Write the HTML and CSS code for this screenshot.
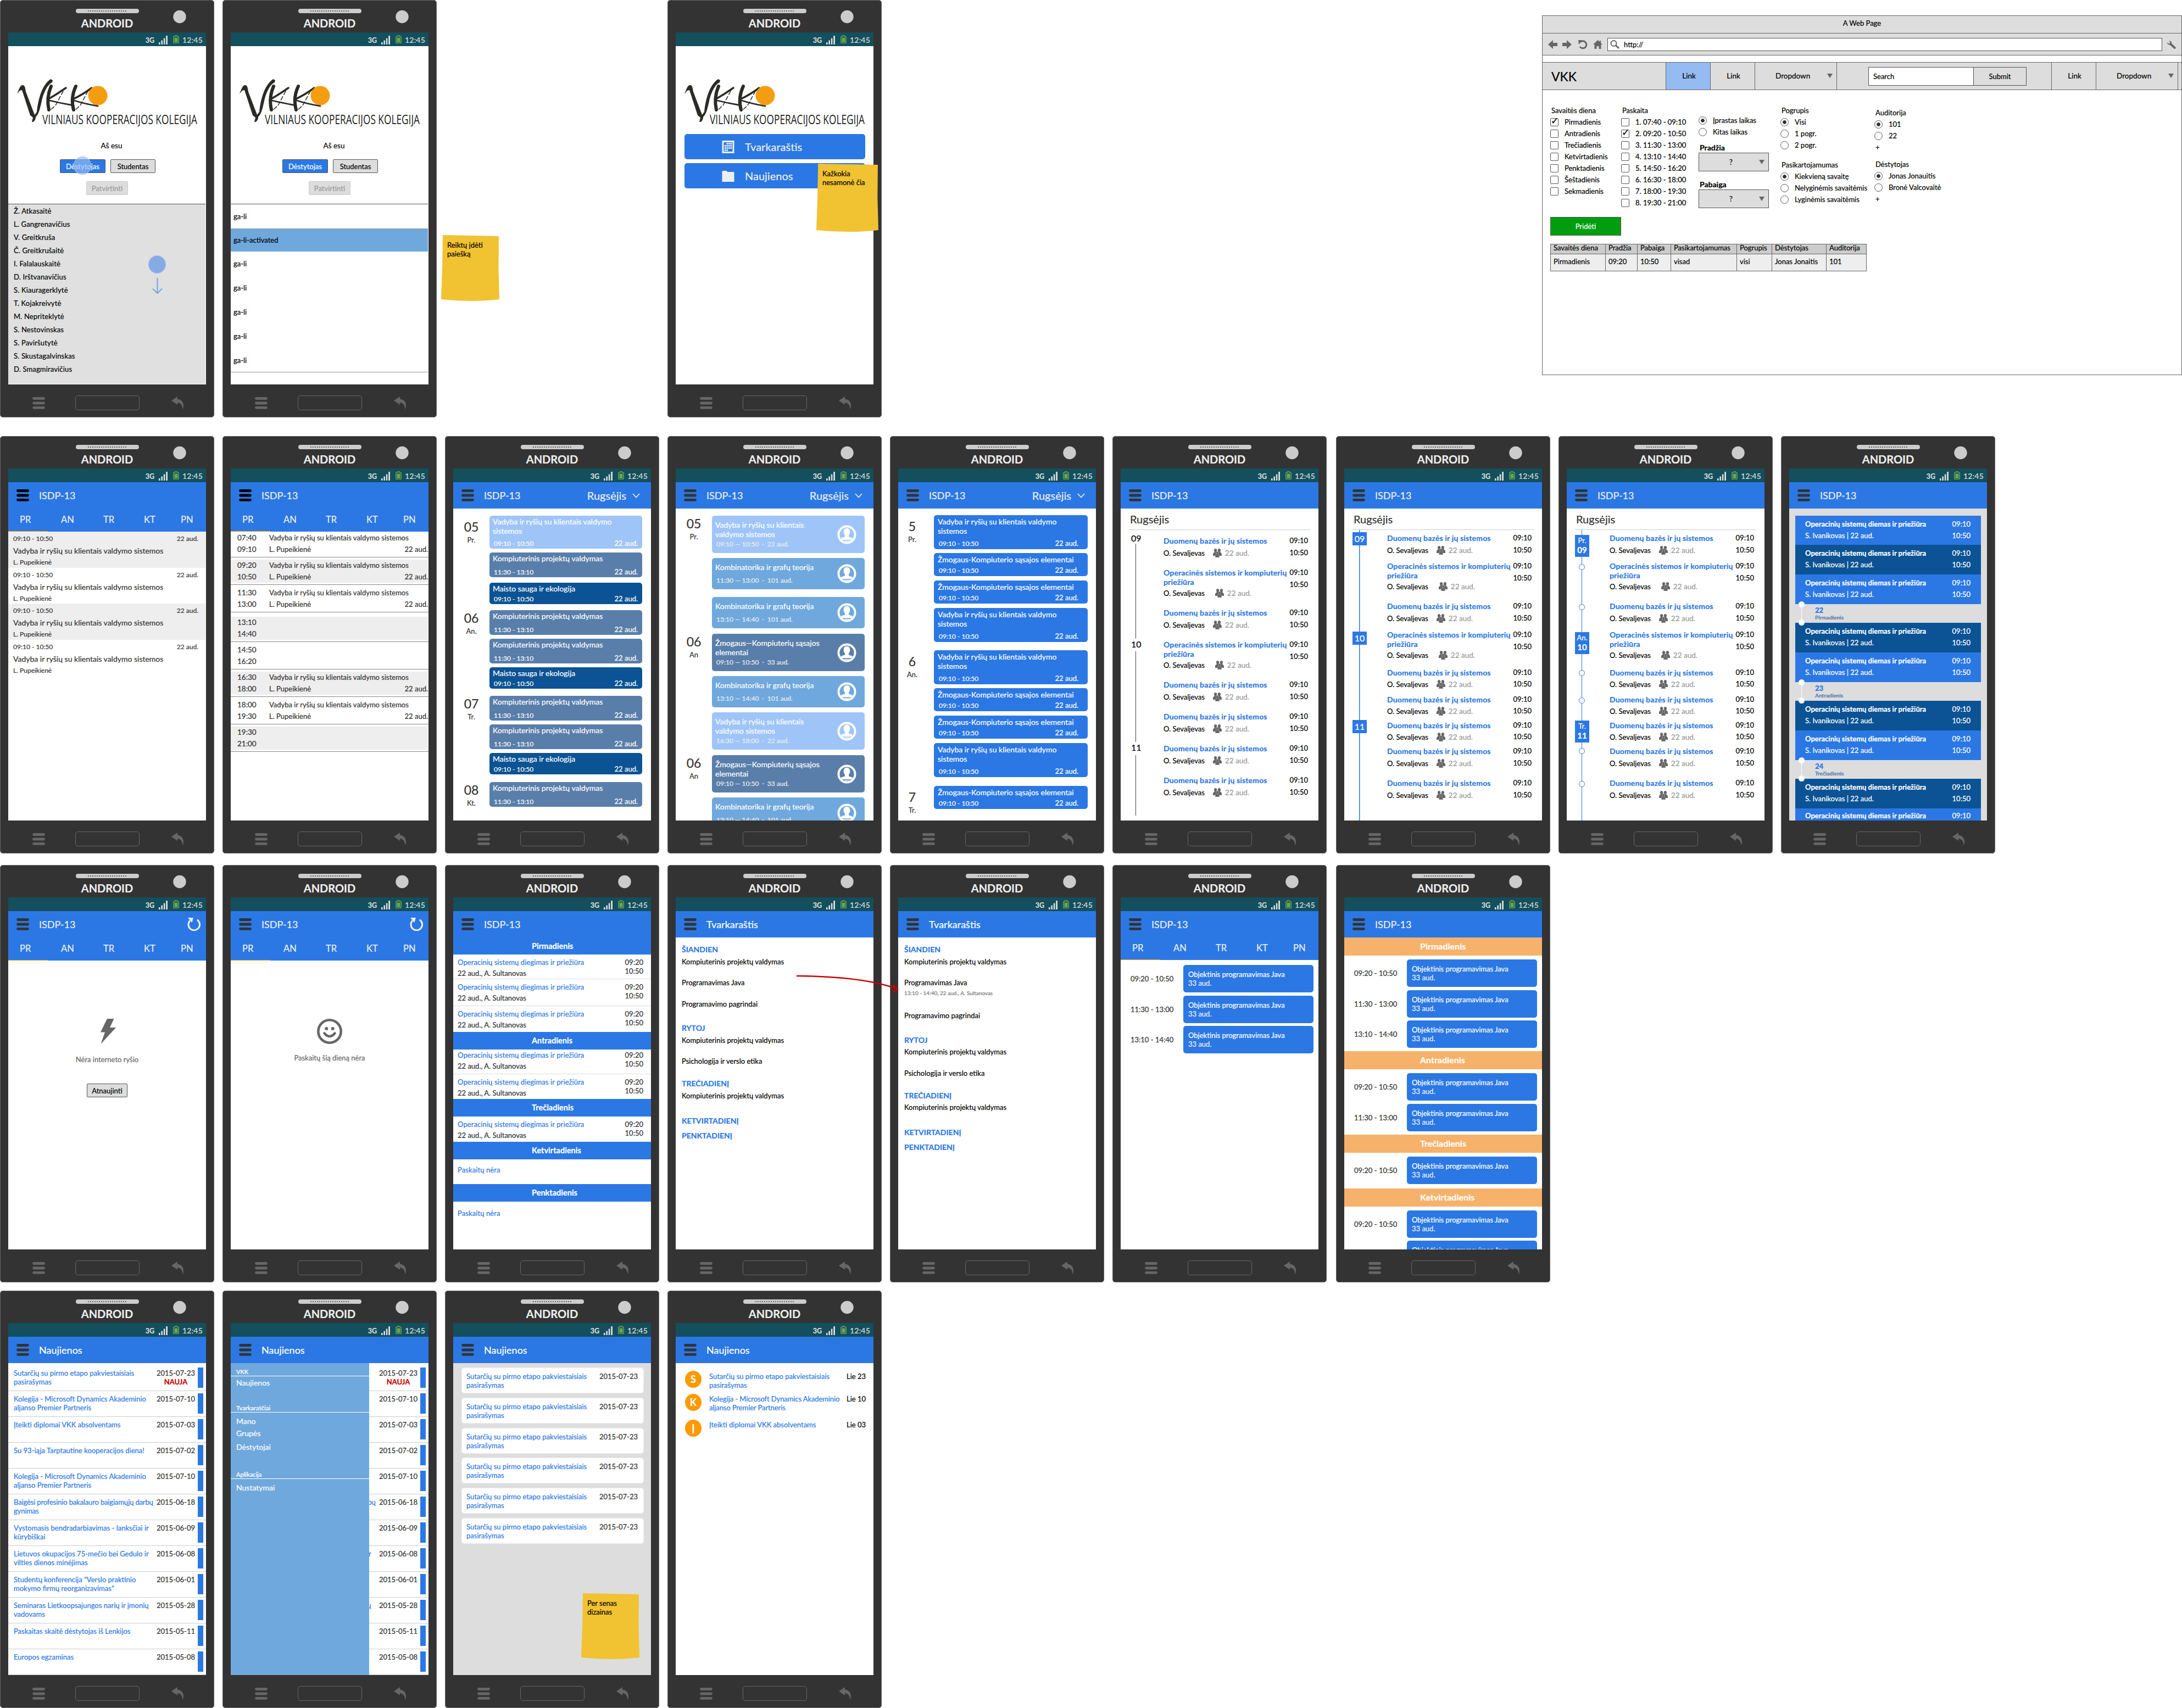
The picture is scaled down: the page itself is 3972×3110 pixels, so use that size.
FILE: index.html
```html
<!DOCTYPE html>
<html lang="lt">
<head>
<meta charset="utf-8">
<title>VKK mockups</title>
<link rel="stylesheet" href="styles.css">
</head>
<body>
<svg class="defs" aria-hidden="true">
  <symbol id="signal" viewBox="0 0 16 16"><path d="M0 12h2.600v4H0zM4.400 8.500H7V16H4.400zM8.800 4.500h2.600V16H8.800zM13.200 0h2.800v16h-2.800z" fill="#ddd"/></symbol>
  <symbol id="battery" viewBox="0 0 11 15"><path d="M3.500 1h4v1.400h1.700q1 0 1 1v10q0 1-1 1H1.800q-1 0-1-1v-10q0-1 1-1h1.700z" fill="none" stroke="#6aa84f" stroke-width="1.400"/><path d="M2.500 4.500h6v8.300h-6z" fill="#6aa84f"/></symbol>
  <symbol id="bars" viewBox="0 0 23 22"><path d="M2.500 2.500h18M2.500 11h18M2.500 19.300h18" stroke="currentColor" stroke-width="4.800" stroke-linecap="round"/></symbol>
  <symbol id="back" viewBox="0 0 23 24"><path d="M0 7.500 11 0v4.600C20 5.500 24.500 14 20.500 23.500 20 16 17.500 11.600 11 11.300V15z" fill="#666"/></symbol>
  <symbol id="group" viewBox="0 0 16 16"><path d="M4.600 0a2.600 2.900 0 0 1 2.100 4.700L6.500 7h3l-.2-2.300A2.600 2.900 0 1 1 13.500 4.700l-.3 1.800Q16 7.500 16 10v3H0v-3Q0 7.500 2.800 6.500L2.500 4.700A2.600 2.900 0 0 1 4.600 0z" fill="#666"/><path d="M8 5a2.300 2.600 0 0 1 1.600 4.500l.2 1.500q2 .800 2 2.500V16H4.200v-2.500q0-1.700 2-2.500l.2-1.500A2.300 2.600 0 0 1 8 5z" fill="#666" stroke="#ccc" stroke-width=".5"/></symbol>
  <symbol id="user" viewBox="0 0 36 36"><circle cx="18" cy="18" r="15.500" fill="none" stroke="#fff" stroke-width="4"/><path d="M18 6c4 0 6 3 6 6.500 0 3-1 5-2.300 6.200V22l7.300 2.500-1.500 3.500h-19L7 24.500l7.300-2.500v-3.300C13 17.500 12 15.500 12 12.500 12 9 14 6 18 6zM11.500 29.500h13q-6.500 2.500-13 0z" fill="#fff"/></symbol>
  <symbol id="reload" viewBox="0 0 24 24"><path d="M17.800 3.800A10.300 10.300 0 1 1 5 5.200" fill="none" stroke="#eee" stroke-width="3"/><path d="M1 0h9.800L8.500 9z" fill="#eee"/></symbol>
  <symbol id="chevron" viewBox="0 0 14 9"><path d="M1 1l6 6.500L13 1" fill="none" stroke="#eee" stroke-width="1.700"/></symbol>
  <symbol id="logo" viewBox="0 0 330 86">
    <path d="M0 27C4 17 6 10 11 11c4 1 4 7 5 12l16 42 4-5C38 40 44 12 61 0l4 2-1 4c-9 4-16 20-19 34-3 12-5 24-11 29 0 6-4 10-7 9l2-8-5-4L9 20 5 21z" fill="#2b2b26"/>
    <g fill="none" stroke="#2b2b26" stroke-linecap="round">
      <path d="M62 13Q53 34 58 56M107 13Q97 34 103 56" stroke-width="6"/>
      <path d="M89 16Q72 28 56 37M136 16Q120 28 101 37" stroke-width="3.500"/>
      <path d="M55 38Q80 44 103 48M101 38Q122 45 147 49" stroke-width="2.800"/>
      <path d="M84 22 70 48 60 57M129 22 115 48 105 57" stroke-width="1.500" stroke-dasharray="7 4"/>
    </g>
    <circle cx="147" cy="30" r="17.500" fill="#f59d11"/>
    <text x="46" y="82" textLength="282" lengthAdjust="spacingAndGlyphs" font-family="Open Sans, sans-serif" font-size="24.500" fill="#222">VILNIAUS KOOPERACIJOS KOLEGIJA</text>
  </symbol>
  <symbol id="chrome-top" viewBox="0 0 389 59"><rect x="138" y="16" width="115" height="8" rx="4" fill="#ccc"/><path d="M160 20h71" stroke="#333" stroke-width="1.500" stroke-dasharray="1.800 2.200"/><circle cx="327" cy="30.500" r="11.700" fill="#ccc"/></symbol>
</svg>

<main class="board">

<div class="row">
  <section class="phone">
    <header class="top"><svg><use href="#chrome-top"/></svg><b>ANDROID</b></header>
    <div class="status"><b>3G</b><svg class="sig"><use href="#signal"/></svg><svg class="bat"><use href="#battery"/></svg><span>12:45</span></div>
    <div class="screen login">
      <svg class="logo"><use href="#logo"/></svg>
      <p class="iam">Aš esu</p>
      <div class="roles"><button class="btn primary">Dėstytojas</button><button class="btn">Studentas</button></div>
      <button class="btn disabled">Patvirtinti</button>
      <ul class="teachers">
        <li>Ž. Atkasaitė</li><li>L. Gangrenavičius</li><li>V. Greitkruša</li><li>Č. Greitkrušaitė</li><li>I. Falalauskaitė</li><li>D. Irštvanavičius</li><li>S. Kiauragerklytė</li><li>T. Kojakreivytė</li><li>M. Nepriteklytė</li><li>S. Nestovinskas</li><li>S. Paviršutytė</li><li>S. Skustagalvinskas</li><li>D. Smagmiravičius</li>
      </ul>
      <i class="touch tap"></i><i class="touch swipe"></i>
      <svg class="swipe-arrow" viewBox="0 0 19 30"><path d="M9.500 0v28M1 19.500l8.500 8.500 8.500-8.500" fill="none" stroke="#6fa8dc" stroke-width="2"/></svg>
    </div>
    <footer class="keys"><svg class="burger"><use href="#bars"/></svg><i class="home"></i><svg class="back"><use href="#back"/></svg></footer>
  </section>

  <section class="phone">
    <header class="top"><svg><use href="#chrome-top"/></svg><b>ANDROID</b></header>
    <div class="status"><b>3G</b><svg class="sig"><use href="#signal"/></svg><svg class="bat"><use href="#battery"/></svg><span>12:45</span></div>
    <div class="screen login">
      <svg class="logo"><use href="#logo"/></svg>
      <p class="iam">Aš esu</p>
      <div class="roles"><button class="btn primary">Dėstytojas</button><button class="btn">Studentas</button></div>
      <button class="btn disabled">Patvirtinti</button>
      <ul class="groups"><li>ga-li</li><li class="on">ga-li-activated</li><li>ga-li</li><li>ga-li</li><li>ga-li</li><li>ga-li</li><li>ga-li</li></ul>
    </div>
    <footer class="keys"><svg class="burger"><use href="#bars"/></svg><i class="home"></i><svg class="back"><use href="#back"/></svg></footer>
  </section>

  <section class="phone skip">
    <header class="top"><svg><use href="#chrome-top"/></svg><b>ANDROID</b></header>
    <div class="status"><b>3G</b><svg class="sig"><use href="#signal"/></svg><svg class="bat"><use href="#battery"/></svg><span>12:45</span></div>
    <div class="screen">
      <svg class="logo"><use href="#logo"/></svg>
      <div class="menu">
        <a><svg viewBox="0 0 22 23"><path d="M0 0h22v23H0z" fill="#eee"/><path d="M3 3h16v17H3z" fill="#2b78e4"/><path d="M8 4h2.600v3H8zM11.500 4h2.600v3h-2.600zM15 4h2.600v3H15zM4.500 8h2.600v3H4.500zM8 8h2.600v3H8zM11.500 8h2.600v3h-2.600zM15 8h2.600v3H15zM4.500 12h2.600v3H4.500zM8 12h2.600v3H8zM11.500 12h2.600v3h-2.600zM15 12h2.600v3H15zM4.500 16h2.600v3H4.500zM8 16h2.600v3H8z" fill="#eee"/></svg>Tvarkaraštis</a>
        <a><svg viewBox="0 0 22 23"><path d="M0 3.500Q0 2 1.500 2h6Q9 2 9.200 4h11.300Q22 4 22 5.500V22H0z" fill="#eee"/></svg>Naujienos</a>
      </div>
    </div>
    <footer class="keys"><svg class="burger"><use href="#bars"/></svg><i class="home"></i><svg class="back"><use href="#back"/></svg></footer>
  </section>

  <section class="window">
    <div class="win-title">A Web Page</div>
    <div class="toolbar">
      <svg viewBox="0 0 17 16"><path d="M0 8 9 0v5h8v6H9v5z" fill="#666"/></svg>
      <svg viewBox="0 0 17 16"><path d="M17 8 8 0v5H0v6h8v5z" fill="#666"/></svg>
      <svg viewBox="0 0 17 16"><path d="M4 3.500A6.500 6.500 0 1 1 3 12" fill="none" stroke="#666" stroke-width="3"/><path d="M0 0h8L1 8z" fill="#666"/></svg>
      <svg viewBox="0 0 17 16"><path d="M8.500 0 0 8h2.500v8h4v-5h4v5h4V8H17l-3-3V1h-2v2z" fill="#666"/></svg>
      <div class="url"><svg viewBox="0 0 17 16"><circle cx="6.500" cy="6" r="5" fill="none" stroke="#666" stroke-width="2"/><path d="M10 9.500l6 5.500" stroke="#666" stroke-width="3"/></svg>http://</div>
      <svg viewBox="0 0 17 16"><path d="M3 1.500 5.500 4 5 6 2.500 6.500 0 4Q0 8.500 4.500 8.500L13 16q3 0 2.800-2.500L8 6Q8.500 1 3 1.500z" fill="#666"/></svg>
    </div>
    <nav class="nav">
      <strong>VKK</strong><a class="link on">Link</a><a class="link">Link</a><a class="drop">Dropdown<i></i></a>
      <span class="search">Search</span><span class="submit">Submit</span>
      <a class="link right">Link</a><a class="drop last">Dropdown<i></i></a>
    </nav>
    <div class="form">
      <div class="col"><p>Savaitės diena</p><label class="cb on">Pirmadienis</label><label class="cb">Antradienis</label><label class="cb">Trečiadienis</label><label class="cb">Ketvirtadienis</label><label class="cb">Penktadienis</label><label class="cb">Šeštadienis</label><label class="cb">Sekmadienis</label></div>
      <div class="col"><p>Paskaita</p><label class="cb">1. 07:40 - 09:10</label><label class="cb on">2. 09:20 - 10:50</label><label class="cb">3. 11:30 - 13:00</label><label class="cb">4. 13:10 - 14:40</label><label class="cb">5. 14:50 - 16:20</label><label class="cb">6. 16:30 - 18:00</label><label class="cb">7. 18:00 - 19:30</label><label class="cb">8. 19:30 - 21:00</label></div>
      <div class="col times"><label class="rd on">Įprastas laikas</label><label class="rd">Kitas laikas</label><h5>Pradžia</h5><div class="select">?<i></i></div><h5>Pabaiga</h5><div class="select">?<i></i></div></div>
      <div class="col"><p>Pogrupis</p><label class="rd on">Visi</label><label class="rd">1 pogr.</label><label class="rd">2 pogr.</label><p class="second">Pasikartojamumas</p><label class="rd on">Kiekvieną savaitę</label><label class="rd">Nelyginėmis savaitėmis</label><label class="rd">Lyginėmis savaitėmis</label></div>
      <div class="col rooms"><p>Auditorija</p><label class="rd on">101</label><label class="rd">22</label><p>+</p><p class="second">Dėstytojas</p><label class="rd on">Jonas Jonauitis</label><label class="rd">Bronė Valcovaitė</label><p>+</p></div>
    </div>
    <div class="add">Pridėti</div>
    <table class="table">
      <tr><th>Savaitės diena</th><th>Pradžia</th><th>Pabaiga</th><th>Pasikartojamumas</th><th>Pogrupis</th><th>Dėstytojas</th><th>Auditorija</th></tr>
      <tr><td>Pirmadienis</td><td>09:20</td><td>10:50</td><td>visad</td><td>visi</td><td>Jonas Jonaitis</td><td>101</td></tr>
    </table>
  </section>
</div>

<div class="row second-row">
  <section class="phone">
    <header class="top"><svg><use href="#chrome-top"/></svg><b>ANDROID</b></header>
    <div class="status"><b>3G</b><svg class="sig"><use href="#signal"/></svg><svg class="bat"><use href="#battery"/></svg><span>12:45</span></div>
    <div class="screen">
      <div class="bar dark"><svg class="burger"><use href="#bars"/></svg><span>ISDP-13</span></div>
      <div class="tabs"><span>PR</span><span>AN</span><span>TR</span><span>KT</span><span>PN</span></div>
      <ul class="lectures">
        <li><p class="s">09:10 - 10:50<span>22 aud.</span></p><p class="t">Vadyba ir ryšių su klientais valdymo sistemos</p><p class="s">L. Pupeikienė</p></li>
        <li><p class="s">09:10 - 10:50<span>22 aud.</span></p><p class="t">Vadyba ir ryšių su klientais valdymo sistemos</p><p class="s">L. Pupeikienė</p></li>
        <li><p class="s">09:10 - 10:50<span>22 aud.</span></p><p class="t">Vadyba ir ryšių su klientais valdymo sistemos</p><p class="s">L. Pupeikienė</p></li>
        <li><p class="s">09:10 - 10:50<span>22 aud.</span></p><p class="t">Vadyba ir ryšių su klientais valdymo sistemos</p><p class="s">L. Pupeikienė</p></li>
      </ul>
    </div>
    <footer class="keys"><svg class="burger"><use href="#bars"/></svg><i class="home"></i><svg class="back"><use href="#back"/></svg></footer>
  </section>

  <section class="phone">
    <header class="top"><svg><use href="#chrome-top"/></svg><b>ANDROID</b></header>
    <div class="status"><b>3G</b><svg class="sig"><use href="#signal"/></svg><svg class="bat"><use href="#battery"/></svg><span>12:45</span></div>
    <div class="screen">
      <div class="bar dark"><svg class="burger"><use href="#bars"/></svg><span>ISDP-13</span></div>
      <div class="tabs"><span>PR</span><span>AN</span><span>TR</span><span>KT</span><span>PN</span></div>
      <ul class="slots">
        <li><div><time>07:40<br>09:10</time><p>Vadyba ir ryšių su klientais valdymo sistemos<br>L. Pupeikienė<span>22 aud.</span></p></div></li>
        <li><div><time>09:20<br>10:50</time><p>Vadyba ir ryšių su klientais valdymo sistemos<br>L. Pupeikienė<span>22 aud.</span></p></div></li>
        <li><div><time>11:30<br>13:00</time><p>Vadyba ir ryšių su klientais valdymo sistemos<br>L. Pupeikienė<span>22 aud.</span></p></div></li>
        <li><div><time>13:10<br>14:40</time></div></li>
        <li><div><time>14:50<br>16:20</time></div></li>
        <li><div><time>16:30<br>18:00</time><p>Vadyba ir ryšių su klientais valdymo sistemos<br>L. Pupeikienė<span>22 aud.</span></p></div></li>
        <li><div><time>18:00<br>19:30</time><p>Vadyba ir ryšių su klientais valdymo sistemos<br>L. Pupeikienė<span>22 aud.</span></p></div></li>
        <li><div><time>19:30<br>21:00</time></div></li>
      </ul>
    </div>
    <footer class="keys"><svg class="burger"><use href="#bars"/></svg><i class="home"></i><svg class="back"><use href="#back"/></svg></footer>
  </section>

  <section class="phone">
    <header class="top"><svg><use href="#chrome-top"/></svg><b>ANDROID</b></header>
    <div class="status"><b>3G</b><svg class="sig"><use href="#signal"/></svg><svg class="bat"><use href="#battery"/></svg><span>12:45</span></div>
    <div class="screen">
      <div class="bar"><svg class="burger"><use href="#bars"/></svg><span>ISDP-13</span><span class="month">Rugsėjis<svg><use href="#chevron"/></svg></span></div>
      <div class="days mixed">
        <div class="day first"><div class="date"><b>05</b>Pr.</div><div>
          <div class="ev tall pale">Vadyba ir ryšių su klientais valdymo sistemos<p>09:10 - 10:50<span>22 aud.</span></p></div>
          <div class="ev steel">Kompiuterinis projektų valdymas<p>11:30 - 13:10<span>22 aud.</span></p></div>
          <div class="ev short navy">Maisto sauga ir ekologija<p>09:10 - 10:50<span>22 aud.</span></p></div></div></div>
        <div class="day"><div class="date"><b>06</b>An.</div><div>
          <div class="ev steel">Kompiuterinis projektų valdymas<p>11:30 - 13:10<span>22 aud.</span></p></div>
          <div class="ev steel">Kompiuterinis projektų valdymas<p>11:30 - 13:10<span>22 aud.</span></p></div>
          <div class="ev short navy">Maisto sauga ir ekologija<p>09:10 - 10:50<span>22 aud.</span></p></div></div></div>
        <div class="day"><div class="date"><b>07</b>Tr.</div><div>
          <div class="ev steel">Kompiuterinis projektų valdymas<p>11:30 - 13:10<span>22 aud.</span></p></div>
          <div class="ev steel">Kompiuterinis projektų valdymas<p>11:30 - 13:10<span>22 aud.</span></p></div>
          <div class="ev short navy">Maisto sauga ir ekologija<p>09:10 - 10:50<span>22 aud.</span></p></div></div></div>
        <div class="day"><div class="date"><b>08</b>Kt.</div><div>
          <div class="ev steel">Kompiuterinis projektų valdymas<p>11:30 - 13:10<span>22 aud.</span></p></div></div></div>
      </div>
    </div>
    <footer class="keys"><svg class="burger"><use href="#bars"/></svg><i class="home"></i><svg class="back"><use href="#back"/></svg></footer>
  </section>

  <section class="phone">
    <header class="top"><svg><use href="#chrome-top"/></svg><b>ANDROID</b></header>
    <div class="status"><b>3G</b><svg class="sig"><use href="#signal"/></svg><svg class="bat"><use href="#battery"/></svg><span>12:45</span></div>
    <div class="screen">
      <div class="bar"><svg class="burger"><use href="#bars"/></svg><span>ISDP-13</span><span class="month">Rugsėjis<svg><use href="#chevron"/></svg></span></div>
      <div class="days people">
        <div class="day"><div class="date"><b>05</b>Pr.</div><div>
          <div class="ev tall pale"><div>Vadyba ir ryšių su klientais valdymo sistemos<p>09:10 — 10:50 &nbsp;·&nbsp; 22 aud.</p></div><svg><use href="#user"/></svg></div>
          <div class="ev sky"><div>Kombinatorika ir grafų teorija<p>11:30 — 13:00 &nbsp;·&nbsp; 101 aud.</p></div><svg><use href="#user"/></svg></div>
          <div class="ev sky apart"><div>Kombinatorika ir grafų teorija<p>13:10 — 14:40 &nbsp;·&nbsp; 101 aud.</p></div><svg><use href="#user"/></svg></div></div></div>
        <div class="day"><div class="date"><b>06</b>An</div><div>
          <div class="ev tall steel"><div>Žmogaus—Kompiuterių sąsajos elementai<p>09:10 — 10:50 &nbsp;·&nbsp; 33 aud.</p></div><svg><use href="#user"/></svg></div>
          <div class="ev sky"><div>Kombinatorika ir grafų teorija<p>13:10 — 14:40 &nbsp;·&nbsp; 101 aud.</p></div><svg><use href="#user"/></svg></div>
          <div class="ev tall pale"><div>Vadyba ir ryšių su klientais valdymo sistemos<p>16:30 — 18:00 &nbsp;·&nbsp; 22 aud.</p></div><svg><use href="#user"/></svg></div></div></div>
        <div class="day"><div class="date"><b>06</b>An</div><div>
          <div class="ev tall steel"><div>Žmogaus—Kompiuterių sąsajos elementai<p>09:10 — 10:50 &nbsp;·&nbsp; 33 aud.</p></div><svg><use href="#user"/></svg></div>
          <div class="ev sky"><div>Kombinatorika ir grafų teorija<p>13:10 — 14:40 &nbsp;·&nbsp; 101 aud.</p></div><svg><use href="#user"/></svg></div></div></div>
      </div>
    </div>
    <footer class="keys"><svg class="burger"><use href="#bars"/></svg><i class="home"></i><svg class="back"><use href="#back"/></svg></footer>
  </section>

  <section class="phone">
    <header class="top"><svg><use href="#chrome-top"/></svg><b>ANDROID</b></header>
    <div class="status"><b>3G</b><svg class="sig"><use href="#signal"/></svg><svg class="bat"><use href="#battery"/></svg><span>12:45</span></div>
    <div class="screen">
      <div class="bar"><svg class="burger"><use href="#bars"/></svg><span>ISDP-13</span><span class="month">Rugsėjis<svg><use href="#chevron"/></svg></span></div>
      <div class="days plain">
        <div class="day"><div class="date"><b>5</b>Pr.</div><div>
          <div class="ev tall">Vadyba ir ryšių su klientais valdymo sistemos<p>09:10 - 10:50<span>22 aud.</span></p></div>
          <div class="ev">Žmogaus-Kompiuterio sąsajos elementai<p>09:10 - 10:50<span>22 aud.</span></p></div>
          <div class="ev">Žmogaus-Kompiuterio sąsajos elementai<p>09:10 - 10:50<span>22 aud.</span></p></div>
          <div class="ev tall">Vadyba ir ryšių su klientais valdymo sistemos<p>09:10 - 10:50<span>22 aud.</span></p></div></div></div>
        <div class="day"><div class="date"><b>6</b>An.</div><div>
          <div class="ev tall">Vadyba ir ryšių su klientais valdymo sistemos<p>09:10 - 10:50<span>22 aud.</span></p></div>
          <div class="ev">Žmogaus-Kompiuterio sąsajos elementai<p>09:10 - 10:50<span>22 aud.</span></p></div>
          <div class="ev">Žmogaus-Kompiuterio sąsajos elementai<p>09:10 - 10:50<span>22 aud.</span></p></div>
          <div class="ev tall">Vadyba ir ryšių su klientais valdymo sistemos<p>09:10 - 10:50<span>22 aud.</span></p></div></div></div>
        <div class="day"><div class="date"><b>7</b>Tr.</div><div>
          <div class="ev">Žmogaus-Kompiuterio sąsajos elementai<p>09:10 - 10:50<span>22 aud.</span></p></div></div></div>
      </div>
    </div>
    <footer class="keys"><svg class="burger"><use href="#bars"/></svg><i class="home"></i><svg class="back"><use href="#back"/></svg></footer>
  </section>

  <section class="phone">
    <header class="top"><svg><use href="#chrome-top"/></svg><b>ANDROID</b></header>
    <div class="status"><b>3G</b><svg class="sig"><use href="#signal"/></svg><svg class="bat"><use href="#battery"/></svg><span>12:45</span></div>
    <div class="screen">
      <div class="bar"><svg class="burger"><use href="#bars"/></svg><span>ISDP-13</span></div>
      <h2 class="heading">Rugsėjis</h2>
      <div class="agenda loose">
        <div class="rail numbers"><b>09</b><i></i><b>10</b><i></i><b>11</b><i></i></div>
        <ul>
          <li><div><h4>Duomenų bazės ir jų sistemos</h4><p>O. Sevaljevas<svg><use href="#group"/></svg><em>22 aud.</em></p></div><time>09:10<br>10:50</time></li>
          <li class="two"><div><h4>Operacinės sistemos ir kompiuterių priežiūra</h4><p>O. Sevaljevas<svg><use href="#group"/></svg><em>22 aud.</em></p></div><time>09:10<br>10:50</time></li>
          <li><div><h4>Duomenų bazės ir jų sistemos</h4><p>O. Sevaljevas<svg><use href="#group"/></svg><em>22 aud.</em></p></div><time>09:10<br>10:50</time></li>
          <li class="two"><div><h4>Operacinės sistemos ir kompiuterių priežiūra</h4><p>O. Sevaljevas<svg><use href="#group"/></svg><em>22 aud.</em></p></div><time>09:10<br>10:50</time></li>
          <li><div><h4>Duomenų bazės ir jų sistemos</h4><p>O. Sevaljevas<svg><use href="#group"/></svg><em>22 aud.</em></p></div><time>09:10<br>10:50</time></li>
          <li><div><h4>Duomenų bazės ir jų sistemos</h4><p>O. Sevaljevas<svg><use href="#group"/></svg><em>22 aud.</em></p></div><time>09:10<br>10:50</time></li>
          <li><div><h4>Duomenų bazės ir jų sistemos</h4><p>O. Sevaljevas<svg><use href="#group"/></svg><em>22 aud.</em></p></div><time>09:10<br>10:50</time></li>
          <li><div><h4>Duomenų bazės ir jų sistemos</h4><p>O. Sevaljevas<svg><use href="#group"/></svg><em>22 aud.</em></p></div><time>09:10<br>10:50</time></li>
        </ul>
      </div>
    </div>
    <footer class="keys"><svg class="burger"><use href="#bars"/></svg><i class="home"></i><svg class="back"><use href="#back"/></svg></footer>
  </section>

  <section class="phone">
    <header class="top"><svg><use href="#chrome-top"/></svg><b>ANDROID</b></header>
    <div class="status"><b>3G</b><svg class="sig"><use href="#signal"/></svg><svg class="bat"><use href="#battery"/></svg><span>12:45</span></div>
    <div class="screen">
      <div class="bar"><svg class="burger"><use href="#bars"/></svg><span>ISDP-13</span></div>
      <h2 class="heading">Rugsėjis</h2>
      <div class="agenda tight">
        <div class="rail badges"><b>09</b><b>10</b><b>11</b></div>
        <ul>
          <li><div><h4>Duomenų bazės ir jų sistemos</h4><p>O. Sevaljevas<svg><use href="#group"/></svg><em>22 aud.</em></p></div><time>09:10<br>10:50</time></li>
          <li class="two"><div><h4>Operacinės sistemos ir kompiuterių priežiūra</h4><p>O. Sevaljevas<svg><use href="#group"/></svg><em>22 aud.</em></p></div><time>09:10<br>10:50</time></li>
          <li><div><h4>Duomenų bazės ir jų sistemos</h4><p>O. Sevaljevas<svg><use href="#group"/></svg><em>22 aud.</em></p></div><time>09:10<br>10:50</time></li>
          <li class="two"><div><h4>Operacinės sistemos ir kompiuterių priežiūra</h4><p>O. Sevaljevas<svg><use href="#group"/></svg><em>22 aud.</em></p></div><time>09:10<br>10:50</time></li>
          <li><div><h4>Duomenų bazės ir jų sistemos</h4><p>O. Sevaljevas<svg><use href="#group"/></svg><em>22 aud.</em></p></div><time>09:10<br>10:50</time></li>
          <li><div><h4>Duomenų bazės ir jų sistemos</h4><p>O. Sevaljevas<svg><use href="#group"/></svg><em>22 aud.</em></p></div><time>09:10<br>10:50</time></li>
          <li><div><h4>Duomenų bazės ir jų sistemos</h4><p>O. Sevaljevas<svg><use href="#group"/></svg><em>22 aud.</em></p></div><time>09:10<br>10:50</time></li>
          <li><div><h4>Duomenų bazės ir jų sistemos</h4><p>O. Sevaljevas<svg><use href="#group"/></svg><em>22 aud.</em></p></div><time>09:10<br>10:50</time></li>
          <li><div><h4>Duomenų bazės ir jų sistemos</h4><p>O. Sevaljevas<svg><use href="#group"/></svg><em>22 aud.</em></p></div><time>09:10<br>10:50</time></li>
        </ul>
      </div>
    </div>
    <footer class="keys"><svg class="burger"><use href="#bars"/></svg><i class="home"></i><svg class="back"><use href="#back"/></svg></footer>
  </section>

  <section class="phone">
    <header class="top"><svg><use href="#chrome-top"/></svg><b>ANDROID</b></header>
    <div class="status"><b>3G</b><svg class="sig"><use href="#signal"/></svg><svg class="bat"><use href="#battery"/></svg><span>12:45</span></div>
    <div class="screen">
      <div class="bar"><svg class="burger"><use href="#bars"/></svg><span>ISDP-13</span></div>
      <h2 class="heading">Rugsėjis</h2>
      <div class="agenda tight">
        <div class="rail dots"><b><small>Pr.</small>09</b><i></i><i></i><b><small>An.</small>10</b><i></i><i></i><b><small>Tr.</small>11</b><i></i><i></i></div>
        <ul>
          <li><div><h4>Duomenų bazės ir jų sistemos</h4><p>O. Sevaljevas<svg><use href="#group"/></svg><em>22 aud.</em></p></div><time>09:10<br>10:50</time></li>
          <li class="two"><div><h4>Operacinės sistemos ir kompiuterių priežiūra</h4><p>O. Sevaljevas<svg><use href="#group"/></svg><em>22 aud.</em></p></div><time>09:10<br>10:50</time></li>
          <li><div><h4>Duomenų bazės ir jų sistemos</h4><p>O. Sevaljevas<svg><use href="#group"/></svg><em>22 aud.</em></p></div><time>09:10<br>10:50</time></li>
          <li class="two"><div><h4>Operacinės sistemos ir kompiuterių priežiūra</h4><p>O. Sevaljevas<svg><use href="#group"/></svg><em>22 aud.</em></p></div><time>09:10<br>10:50</time></li>
          <li><div><h4>Duomenų bazės ir jų sistemos</h4><p>O. Sevaljevas<svg><use href="#group"/></svg><em>22 aud.</em></p></div><time>09:10<br>10:50</time></li>
          <li><div><h4>Duomenų bazės ir jų sistemos</h4><p>O. Sevaljevas<svg><use href="#group"/></svg><em>22 aud.</em></p></div><time>09:10<br>10:50</time></li>
          <li><div><h4>Duomenų bazės ir jų sistemos</h4><p>O. Sevaljevas<svg><use href="#group"/></svg><em>22 aud.</em></p></div><time>09:10<br>10:50</time></li>
          <li><div><h4>Duomenų bazės ir jų sistemos</h4><p>O. Sevaljevas<svg><use href="#group"/></svg><em>22 aud.</em></p></div><time>09:10<br>10:50</time></li>
          <li><div><h4>Duomenų bazės ir jų sistemos</h4><p>O. Sevaljevas<svg><use href="#group"/></svg><em>22 aud.</em></p></div><time>09:10<br>10:50</time></li>
        </ul>
      </div>
    </div>
    <footer class="keys"><svg class="burger"><use href="#bars"/></svg><i class="home"></i><svg class="back"><use href="#back"/></svg></footer>
  </section>

  <section class="phone">
    <header class="top"><svg><use href="#chrome-top"/></svg><b>ANDROID</b></header>
    <div class="status"><b>3G</b><svg class="sig"><use href="#signal"/></svg><svg class="bat"><use href="#battery"/></svg><span>12:45</span></div>
    <div class="screen grey">
      <div class="bar"><svg class="burger"><use href="#bars"/></svg><span>ISDP-13</span></div>
      <div class="blocks">
        <div class="blk"><p><b>Operacinių sistemų diemas ir priežiūra</b><br>S. Ivanikovas | 22 aud.</p><time>09:10<br>10:50</time></div>
        <div class="blk deep"><p><b>Operacinių sistemų diemas ir priežiūra</b><br>S. Ivanikovas | 22 aud.</p><time>09:10<br>10:50</time></div>
        <div class="blk"><p><b>Operacinių sistemų diemas ir priežiūra</b><br>S. Ivanikovas | 22 aud.</p><time>09:10<br>10:50</time></div>
        <div class="sep"><i></i><p><b>22</b>Pirmadienis</p></div>
        <div class="blk deep"><p><b>Operacinių sistemų diemas ir priežiūra</b><br>S. Ivanikovas | 22 aud.</p><time>09:10<br>10:50</time></div>
        <div class="blk"><p><b>Operacinių sistemų diemas ir priežiūra</b><br>S. Ivanikovas | 22 aud.</p><time>09:10<br>10:50</time></div>
        <div class="sep"><i></i><p><b>23</b>Antradienis</p></div>
        <div class="blk deep"><p><b>Operacinių sistemų diemas ir priežiūra</b><br>S. Ivanikovas | 22 aud.</p><time>09:10<br>10:50</time></div>
        <div class="blk"><p><b>Operacinių sistemų diemas ir priežiūra</b><br>S. Ivanikovas | 22 aud.</p><time>09:10<br>10:50</time></div>
        <div class="sep"><i></i><p><b>24</b>Trečiadienis</p></div>
        <div class="blk deep"><p><b>Operacinių sistemų diemas ir priežiūra</b><br>S. Ivanikovas | 22 aud.</p><time>09:10<br>10:50</time></div>
        <div class="blk cut"><p><b>Operacinių sistemų diemas ir priežiūra</b></p><time>09:10</time></div>
      </div>
    </div>
    <footer class="keys"><svg class="burger"><use href="#bars"/></svg><i class="home"></i><svg class="back"><use href="#back"/></svg></footer>
  </section>
</div>

<div class="row third-row">
  <section class="phone">
    <header class="top"><svg><use href="#chrome-top"/></svg><b>ANDROID</b></header>
    <div class="status"><b>3G</b><svg class="sig"><use href="#signal"/></svg><svg class="bat"><use href="#battery"/></svg><span>12:45</span></div>
    <div class="screen">
      <div class="bar"><svg class="burger"><use href="#bars"/></svg><span>ISDP-13</span><svg class="reload"><use href="#reload"/></svg></div>
      <div class="tabs"><span>PR</span><span>AN</span><span>TR</span><span>KT</span><span>PN</span></div>
      <div class="notice">
        <svg viewBox="0 0 46 46"><path d="M23 0h12.500L28 16h11L11.500 46l7.500-21.500h-8z" fill="#666"/></svg>
        <p class="offline">Nėra interneto ryšio</p><button class="btn">Atnaujinti</button>
      </div>
    </div>
    <footer class="keys"><svg class="burger"><use href="#bars"/></svg><i class="home"></i><svg class="back"><use href="#back"/></svg></footer>
  </section>

  <section class="phone">
    <header class="top"><svg><use href="#chrome-top"/></svg><b>ANDROID</b></header>
    <div class="status"><b>3G</b><svg class="sig"><use href="#signal"/></svg><svg class="bat"><use href="#battery"/></svg><span>12:45</span></div>
    <div class="screen">
      <div class="bar"><svg class="burger"><use href="#bars"/></svg><span>ISDP-13</span><svg class="reload"><use href="#reload"/></svg></div>
      <div class="tabs"><span>PR</span><span>AN</span><span>TR</span><span>KT</span><span>PN</span></div>
      <div class="notice">
        <svg viewBox="0 0 46 46"><circle cx="23" cy="23" r="20.700" fill="none" stroke="#666" stroke-width="4.600"/><circle cx="17.300" cy="18" r="3" fill="#666"/><circle cx="28.700" cy="18" r="3" fill="#666"/><path d="M13.500 26.500q9.500 11 19 0" fill="none" stroke="#666" stroke-width="4.500" stroke-linecap="round"/></svg>
        <p>Paskaitų šią dieną nėra</p>
      </div>
    </div>
    <footer class="keys"><svg class="burger"><use href="#bars"/></svg><i class="home"></i><svg class="back"><use href="#back"/></svg></footer>
  </section>

  <section class="phone">
    <header class="top"><svg><use href="#chrome-top"/></svg><b>ANDROID</b></header>
    <div class="status"><b>3G</b><svg class="sig"><use href="#signal"/></svg><svg class="bat"><use href="#battery"/></svg><span>12:45</span></div>
    <div class="screen">
      <div class="bar"><svg class="burger"><use href="#bars"/></svg><span>ISDP-13</span></div>
      <div class="week">
        <h3>Pirmadienis</h3>
        <div class="wk w45"><p><a>Operacinių sistemų diegimas ir priežiūra</a>22 aud., A. Sultanovas</p><time>09:20<br>10:50</time></div>
        <div class="wk w49"><p><a>Operacinių sistemų diegimas ir priežiūra</a>22 aud., A. Sultanovas</p><time>09:20<br>10:50</time></div>
        <div class="wk end"><p><a>Operacinių sistemų diegimas ir priežiūra</a>22 aud., A. Sultanovas</p><time>09:20<br>10:50</time></div>
        <h3>Antradienis</h3>
        <div class="wk w45 up"><p><a>Operacinių sistemų diegimas ir priežiūra</a>22 aud., A. Sultanovas</p><time>09:20<br>10:50</time></div>
        <div class="wk w45 end"><p><a>Operacinių sistemų diegimas ir priežiūra</a>22 aud., A. Sultanovas</p><time>09:20<br>10:50</time></div>
        <h3>Trečiadienis</h3>
        <div class="wk w46 end"><p><a>Operacinių sistemų diegimas ir priežiūra</a>22 aud., A. Sultanovas</p><time>09:20<br>10:50</time></div>
        <h3>Ketvirtadienis</h3>
        <div class="wk w45 end none"><p><a>Paskaitų nėra</a></p></div>
        <h3>Penktadienis</h3>
        <div class="wk w45 end none low"><p><a>Paskaitų nėra</a></p></div>
      </div>
    </div>
    <footer class="keys"><svg class="burger"><use href="#bars"/></svg><i class="home"></i><svg class="back"><use href="#back"/></svg></footer>
  </section>

  <section class="phone">
    <header class="top"><svg><use href="#chrome-top"/></svg><b>ANDROID</b></header>
    <div class="status"><b>3G</b><svg class="sig"><use href="#signal"/></svg><svg class="bat"><use href="#battery"/></svg><span>12:45</span></div>
    <div class="screen">
      <div class="bar"><svg class="burger"><use href="#bars"/></svg><span class="bright">Tvarkaraštis</span></div>
      <div class="plan">
        <h3>ŠIANDIEN</h3><p>Kompiuterinis projektų valdymas</p><p>Programavimas Java</p><p>Programavimo pagrindai</p>
        <h3 class="gap">RYTOJ</h3><p>Kompiuterinis projektų valdymas</p><p>Psichologija ir verslo etika</p>
        <h3>TREČIADIENĮ</h3><p>Kompiuterinis projektų valdymas</p>
        <h3 class="far">KETVIRTADIENĮ</h3><h3>PENKTADIENĮ</h3>
      </div>
    </div>
    <footer class="keys"><svg class="burger"><use href="#bars"/></svg><i class="home"></i><svg class="back"><use href="#back"/></svg></footer>
  </section>

  <section class="phone">
    <header class="top"><svg><use href="#chrome-top"/></svg><b>ANDROID</b></header>
    <div class="status"><b>3G</b><svg class="sig"><use href="#signal"/></svg><svg class="bat"><use href="#battery"/></svg><span>12:45</span></div>
    <div class="screen">
      <div class="bar"><svg class="burger"><use href="#bars"/></svg><span class="bright">Tvarkaraštis</span></div>
      <div class="plan">
        <h3>ŠIANDIEN</h3><p>Kompiuterinis projektų valdymas</p><p>Programavimas Java</p><small>13:10 - 14:40, 22 aud., A. Sultanovas</small><p class="after">Programavimo pagrindai</p>
        <h3 class="gap">RYTOJ</h3><p>Kompiuterinis projektų valdymas</p><p>Psichologija ir verslo etika</p>
        <h3>TREČIADIENĮ</h3><p>Kompiuterinis projektų valdymas</p>
        <h3 class="far">KETVIRTADIENĮ</h3><h3>PENKTADIENĮ</h3>
      </div>
    </div>
    <footer class="keys"><svg class="burger"><use href="#bars"/></svg><i class="home"></i><svg class="back"><use href="#back"/></svg></footer>
  </section>

  <section class="phone">
    <header class="top"><svg><use href="#chrome-top"/></svg><b>ANDROID</b></header>
    <div class="status"><b>3G</b><svg class="sig"><use href="#signal"/></svg><svg class="bat"><use href="#battery"/></svg><span>12:45</span></div>
    <div class="screen">
      <div class="bar"><svg class="burger"><use href="#bars"/></svg><span>ISDP-13</span></div>
      <div class="tabs low"><span>PR</span><span>AN</span><span>TR</span><span>KT</span><span>PN</span></div>
      <div class="objs spaced">
        <div class="obj"><time>09:20 - 10:50</time><p>Objektinis programavimas Java<br><span>33 aud.</span></p></div>
        <div class="obj"><time>11:30 - 13:00</time><p>Objektinis programavimas Java<br><span>33 aud.</span></p></div>
        <div class="obj"><time>13:10 - 14:40</time><p>Objektinis programavimas Java<br><span>33 aud.</span></p></div>
      </div>
    </div>
    <footer class="keys"><svg class="burger"><use href="#bars"/></svg><i class="home"></i><svg class="back"><use href="#back"/></svg></footer>
  </section>

  <section class="phone">
    <header class="top"><svg><use href="#chrome-top"/></svg><b>ANDROID</b></header>
    <div class="status"><b>3G</b><svg class="sig"><use href="#signal"/></svg><svg class="bat"><use href="#battery"/></svg><span>12:45</span></div>
    <div class="screen">
      <div class="bar"><svg class="burger"><use href="#bars"/></svg><span>ISDP-13</span></div>
      <h3 class="orange">Pirmadienis</h3>
      <div class="objs">
        <div class="obj"><time>09:20 - 10:50</time><p>Objektinis programavimas Java<br><span>33 aud.</span></p></div>
        <div class="obj"><time>11:30 - 13:00</time><p>Objektinis programavimas Java<br><span>33 aud.</span></p></div>
        <div class="obj"><time>13:10 - 14:40</time><p>Objektinis programavimas Java<br><span>33 aud.</span></p></div>
      </div>
      <h3 class="orange">Antradienis</h3>
      <div class="objs">
        <div class="obj"><time>09:20 - 10:50</time><p>Objektinis programavimas Java<br><span>33 aud.</span></p></div>
        <div class="obj"><time>11:30 - 13:00</time><p>Objektinis programavimas Java<br><span>33 aud.</span></p></div>
      </div>
      <h3 class="orange">Trečiadienis</h3>
      <div class="objs single">
        <div class="obj"><time>09:20 - 10:50</time><p>Objektinis programavimas Java<br><span>33 aud.</span></p></div>
      </div>
      <h3 class="orange">Ketvirtadienis</h3>
      <div class="objs">
        <div class="obj"><time>09:20 - 10:50</time><p>Objektinis programavimas Java<br><span>33 aud.</span></p></div>
        <div class="obj"><time></time><p>Objektinis programavimas Java</p></div>
      </div>
    </div>
    <footer class="keys"><svg class="burger"><use href="#bars"/></svg><i class="home"></i><svg class="back"><use href="#back"/></svg></footer>
  </section>
</div>

<div class="row fourth-row">
  <section class="phone">
    <header class="top"><svg><use href="#chrome-top"/></svg><b>ANDROID</b></header>
    <div class="status"><b>3G</b><svg class="sig"><use href="#signal"/></svg><svg class="bat"><use href="#battery"/></svg><span>12:45</span></div>
    <div class="screen">
      <div class="bar"><svg class="burger"><use href="#bars"/></svg><span class="bright">Naujienos</span></div>
      <ul class="news">
        <li><a>Sutarčių su pirmo etapo pakviestaisiais<br>pasirašymas</a><time>2015-07-23<b>NAUJA</b></time><i></i></li>
        <li><a>Kolegija - Microsoft Dynamics Akademinio<br>aljanso Premier Partneris</a><time>2015-07-10</time><i></i></li>
        <li><a>Įteikti diplomai VKK absolventams</a><time>2015-07-03</time><i></i></li>
        <li><a>Su 93-iąja Tarptautine kooperacijos diena!</a><time>2015-07-02</time><i></i></li>
        <li><a>Kolegija - Microsoft Dynamics Akademinio<br>aljanso Premier Partneris</a><time>2015-07-10</time><i></i></li>
        <li><a class="long">Baigėsi profesinio bakalauro baigiamųjų darbų<br>gynimas</a><time>2015-06-18</time><i></i></li>
        <li><a>Vystomasis bendradarbiavimas - lanksčiai ir<br>kūrybiškai</a><time>2015-06-09</time><i></i></li>
        <li><a>Lietuvos okupacijos 75-mečio bei Gedulo ir<br>vilties dienos minėjimas</a><time>2015-06-08</time><i></i></li>
        <li><a>Studentų konferencija "Verslo praktinio<br>mokymo firmų reorganizavimas"</a><time>2015-06-01</time><i></i></li>
        <li><a>Seminaras Lietkoopsajungos narių ir įmonių<br>vadovams</a><time>2015-05-28</time><i></i></li>
        <li><a>Paskaitas skaitė dėstytojas iš Lenkijos</a><time>2015-05-11</time><i></i></li>
        <li><a>Europos egzaminas</a><time>2015-05-08</time><i></i></li>
      </ul>
    </div>
    <footer class="keys"><svg class="burger"><use href="#bars"/></svg><i class="home"></i><svg class="back"><use href="#back"/></svg></footer>
  </section>

  <section class="phone">
    <header class="top"><svg><use href="#chrome-top"/></svg><b>ANDROID</b></header>
    <div class="status"><b>3G</b><svg class="sig"><use href="#signal"/></svg><svg class="bat"><use href="#battery"/></svg><span>12:45</span></div>
    <div class="screen">
      <div class="bar"><svg class="burger"><use href="#bars"/></svg><span class="bright">Naujienos</span></div>
      <ul class="news">
        <li><a></a><time>2015-07-23<b>NAUJA</b></time><i></i></li>
        <li><a></a><time>2015-07-10</time><i></i></li>
        <li><a></a><time>2015-07-03</time><i></i></li>
        <li><a></a><time>2015-07-02</time><i></i></li>
        <li><a></a><time>2015-07-10</time><i></i></li>
        <li><a class="long">Baigėsi profesinio bakalauro baigiamųjų darbų</a><time>2015-06-18</time><i></i></li>
        <li><a></a><time>2015-06-09</time><i></i></li>
        <li><a>Lietuvos okupacijos 75-mečio bei Gedulo ir</a><time>2015-06-08</time><i></i></li>
        <li><a></a><time>2015-06-01</time><i></i></li>
        <li><a>Seminaras Lietkoopsajungos narių ir įmonių</a><time>2015-05-28</time><i></i></li>
        <li><a></a><time>2015-05-11</time><i></i></li>
        <li><a></a><time>2015-05-08</time><i></i></li>
      </ul>
      <aside class="drawer">
        <h6>VKK</h6><p>Naujienos</p>
        <h6>Tvarkaraščiai</h6><p>Mano</p><p>Grupės</p><p>Dėstytojai</p>
        <h6>Aplikacija</h6><p>Nustatymai</p>
      </aside>
    </div>
    <footer class="keys"><svg class="burger"><use href="#bars"/></svg><i class="home"></i><svg class="back"><use href="#back"/></svg></footer>
  </section>

  <section class="phone">
    <header class="top"><svg><use href="#chrome-top"/></svg><b>ANDROID</b></header>
    <div class="status"><b>3G</b><svg class="sig"><use href="#signal"/></svg><svg class="bat"><use href="#battery"/></svg><span>12:45</span></div>
    <div class="screen grey">
      <div class="bar"><svg class="burger"><use href="#bars"/></svg><span class="bright">Naujienos</span></div>
      <ul class="cards">
        <li><a>Sutarčių su pirmo etapo pakviestaisiais pasirašymas</a><time>2015-07-23</time></li>
        <li><a>Sutarčių su pirmo etapo pakviestaisiais pasirašymas</a><time>2015-07-23</time></li>
        <li><a>Sutarčių su pirmo etapo pakviestaisiais pasirašymas</a><time>2015-07-23</time></li>
        <li><a>Sutarčių su pirmo etapo pakviestaisiais pasirašymas</a><time>2015-07-23</time></li>
        <li><a>Sutarčių su pirmo etapo pakviestaisiais pasirašymas</a><time>2015-07-23</time></li>
        <li><a>Sutarčių su pirmo etapo pakviestaisiais pasirašymas</a><time>2015-07-23</time></li>
      </ul>
    </div>
    <footer class="keys"><svg class="burger"><use href="#bars"/></svg><i class="home"></i><svg class="back"><use href="#back"/></svg></footer>
  </section>

  <section class="phone">
    <header class="top"><svg><use href="#chrome-top"/></svg><b>ANDROID</b></header>
    <div class="status"><b>3G</b><svg class="sig"><use href="#signal"/></svg><svg class="bat"><use href="#battery"/></svg><span>12:45</span></div>
    <div class="screen">
      <div class="bar"><svg class="burger"><use href="#bars"/></svg><span class="bright">Naujienos</span></div>
      <ul class="letters">
        <li><b>S</b><a>Sutarčių su pirmo etapo pakviestaisiais pasirašymas</a><time>Lie 23</time></li>
        <li><b>K</b><a>Kolegija - Microsoft Dynamics Akademinio aljanso Premier Partneris</a><time>Lie 10</time></li>
        <li><b>Į</b><a>Įteikti diplomai VKK absolventams</a><time>Lie 03</time></li>
      </ul>
    </div>
    <footer class="keys"><svg class="burger"><use href="#bars"/></svg><i class="home"></i><svg class="back"><use href="#back"/></svg></footer>
  </section>
</div>

<div class="note note-search"><svg viewBox="0 0 106 120" preserveAspectRatio="none"><path d="M3 0 105 2 104.500 60 106 117Q60 123 0 117L2 60z" fill="#f1c232"/></svg><p>Reiktų įdėti paiešką</p></div>
<div class="note note-news"><svg viewBox="0 0 106 120" preserveAspectRatio="none"><path d="M3 0 105 2 104.500 60 106 117Q60 123 0 117L2 60z" fill="#f1c232"/></svg><p>Kažkokia nesamonė čia</p></div>
<div class="note note-old"><svg viewBox="0 0 106 120" preserveAspectRatio="none"><path d="M3 0 105 2 104.500 60 106 117Q60 123 0 117L2 60z" fill="#f1c232"/></svg><p>Per senas dizainas</p></div>
<svg class="flow" viewBox="0 0 190 40"><path d="M2 7Q125 8 186 31M178 23l8 8-10 6" fill="none" stroke="#c00" stroke-width="2.500"/></svg>
</main>
</body>
</html>
```

FILE: styles.css
```css
* { box-sizing: border-box; }
body, p, h2, h3, h4, h5, h6, ul { margin: 0; padding: 0; font-size: inherit; }
li { list-style: none; }
em, i { font-style: normal; }
body { background: #fff; color: #333; font: 13px/16px Lato, "Liberation Sans", sans-serif; -webkit-text-stroke: .2px; }
svg { display: block; flex: none; overflow: visible; }
.defs { display: none; }
button { font: inherit; }

.board { position: relative; width: 3972px; height: 3110px; overflow: hidden; }
.row { display: flex; gap: 15px; height: 760px; align-items: flex-start; }
.second-row { margin-top: 34px; }
.third-row { margin-top: 21px; }
.fourth-row { margin-top: 15px; }

/* phone shell */
.phone { flex: none; width: 390px; height: 760px; background: #333; border: 1px solid #666; border-radius: 5px; display: flex; flex-direction: column; align-items: center; }
.phone > * { flex: none; }
.phone:nth-child(7) { margin-left: 2px; }
.phone.skip { margin-left: 405px; }
.top { height: 58px; width: 388px; display: grid; }
.top > * { grid-area: 1 / 1; }
.top svg { width: 389px; height: 59px; margin: -1px 0 0 -1px; }
.top b { justify-self: center; align-self: end; font-size: 20px; line-height: 24px; padding-bottom: 5px; color: #eee; }
.status { width: 360px; height: 25px; background: #134f5c; color: #ddd; display: flex; justify-content: flex-end; align-items: center; padding-right: 7px; }
.status b { font-size: 12.500px; margin-right: 8px; padding-top: 4px; }
.status span { font-size: 14px; width: 36px; text-align: right; letter-spacing: .2px; padding-top: 2px; }
.sig { width: 16px; height: 16px; margin: 2px 10px 0 0; }
.bat { width: 11px; height: 15px; margin: 0 6px 0 0; }
.screen { position: relative; width: 360px; height: 616px; background: #fff; overflow: hidden; }
.screen.grey { background: #ddd; }
.keys { width: 388px; height: 58px; display: flex; align-items: center; color: #666; padding: 9px 0 0 58px; }
.burger { width: 23px; height: 22px; }
.home { width: 117px; height: 27px; border: 1px solid #666; border-radius: 5px; margin: 0 58px 0 55px; }
.back { width: 23px; height: 24px; }

/* app bar */
.bar { height: 48px; background: #2b78e4; color: #333; display: flex; align-items: center; padding-left: 15px; }
.bar.dark { color: #000; }
.bar span { color: #eee; font-size: 18px; margin-left: 18px; }
.bar .bright { color: #fff; }
.bar .month { font-size: 20px; margin-left: auto; margin-right: 20px; display: flex; align-items: center; gap: 11px; }
.month svg { width: 14px; height: 9px; }
.reload { width: 24px; height: 24px; margin: 0 10px 0 auto; }
.tabs { height: 42px; background: linear-gradient(#f90, #f90) 0 100% / 72px 1px no-repeat #2b78e4; color: #eee; font-size: 16.500px; line-height: 40px; display: grid; grid-template-columns: 75px 77px 74px 67px auto; padding-left: 21px; }
.tabs.low { height: 41px; line-height: 38px; }

/* login */
.logo { width: 330px; height: 86px; margin: 60px 0 0 16px; }
.iam { margin-top: 27px; padding-left: 16px; text-align: center; color: #000; font-size: 13.500px; }
.roles { display: flex; gap: 9px; margin: 17px 0 15px 94px; }
.btn { display: block; height: 25px; width: 82px; padding: 0; border: 1px solid #555; border-radius: 2px; background: #ddd; color: #000; font-size: 13px; line-height: 22px; text-align: center; }
.btn.primary { background: #2b78e4; color: #fff; width: 83px; }
.btn.disabled { width: 76px; margin-left: 142px; border-color: #ccc; color: #999; }
.teachers { border-top: 1px solid #555; margin: 16px 1px 0 0; height: 328px; background: #e0e0e0; color: #000; padding-left: 10px; line-height: 24px; letter-spacing: .15px; }
.groups { border-top: 1px solid #555; margin: 16px 1px 0 0; color: #000; height: 307px; border-bottom: 1px solid #999; }
.groups li { height: 44px; line-height: 44px; padding-left: 5px; }
.groups li.on { background: linear-gradient(#999, #999) 0 1px / 100% 1px no-repeat #6fa8dc; height: 42px; line-height: 42px; }
.touch { position: absolute; border-radius: 50%; width: 32px; height: 33px; background: rgba(148, 187, 243, .65); border: 1px solid #a4c2f4; }
.tap { left: 119px; top: 201px; }
.swipe { left: 255px; top: 381px; background: #86abe2; }
.swipe-arrow { position: absolute; left: 262px; top: 422px; width: 19px; height: 30px; }
.menu { margin: 14px 0 0 16px; display: grid; gap: 7px; width: 329px; }
.menu a { height: 46px; border-radius: 5px; background: #2b78e4; color: #eee; font-size: 20px; display: flex; align-items: center; padding-left: 68px; gap: 19px; }
.menu svg { width: 23px; height: 23px; }

/* browser window */
.window { flex: none; width: 1165px; height: 655px; margin: 28px 0 0 1187px; border: 1px solid #666; color: #000; background: #fff; }
.win-title { height: 32px; background: #ddd; text-align: center; line-height: 27px; border-bottom: 1px solid #666; }
.toolbar { height: 40px; background: #ddd; border-bottom: 1px solid #666; display: flex; align-items: center; padding-left: 10px; gap: 9px; }
.toolbar svg { width: 17px; height: 16px; }
.toolbar > svg:nth-child(2) { margin-right: 3px; }
.toolbar > svg:nth-child(3) { margin-right: 1px; }
.url { width: 1010px; height: 24px; background: #fff; border: 1px solid #555; display: flex; align-items: center; gap: 8px; padding-left: 4px; }
.nav { height: 51px; margin-top: 12px; background: #ddd; border: 1px solid #666; border-width: 1px 0; display: flex; align-items: center; padding-left: 16px; }
.nav strong { width: 208px; font-size: 23px; font-weight: 400; }
.link, .drop { height: 49px; border-left: 1px solid #666; line-height: 48px; text-align: center; width: 81px; font-size: 13.500px; padding-left: 3px; }
.link.on { background: #94bbf2; }
.drop { width: 150px; border-right: 1px solid #666; display: flex; padding-left: 37px; }
.drop i, .select i { border: 5px solid transparent; border-top: 8px solid #666; border-bottom: 0; margin: 20px 7px 0 auto; height: 0; }
.search, .submit { height: 34px; border: 1px solid #555; line-height: 32px; background: #fff; padding-left: 8px; width: 192px; margin-left: 57px; }
.submit { margin: 0 45px 0 -1px; width: 97px; background: #ddd; padding: 0; text-align: center; }
.form { display: grid; grid-template-columns: 129px 141px 149px 171px auto; padding: 27px 0 0 14px; height: 231px; line-height: 21px; }
.col p, .col h5 { padding-left: 2px; }
.col label { display: flex; align-items: center; gap: 11px; height: 21px; }
.col label::before { content: ""; width: 13px; height: 13px; border: 1px solid #555; border-radius: 2px; background: #fff; font-size: 17px; line-height: 8px; font-weight: 700; }
.col .cb.on::before { content: "✓"; font-family: "DejaVu Sans", sans-serif; }
.col .rd::before { border-radius: 50%; }
.col .rd.on::before { background: radial-gradient(#333 0 3px, #fff 3.700px); }
.times { padding-top: 18px; }
.times h5 { font-size: 14px; line-height: 19px; margin-top: 8px; font-weight: 700; }
.select { width: 128px; height: 34px; background: #ddd; border: 1px solid #555; display: flex; line-height: 32px; padding-left: 55px; }
.select i { margin-top: 12px; }
.select + h5 { margin-top: 14px; }
.second { margin-top: 15px; }
.rooms { padding-top: 4px; }
.rooms .second { margin-top: 10px; }
.add { width: 129px; height: 34px; background: #009e0f; border: 1px solid #555; color: #fff; margin-left: 14px; text-align: center; line-height: 32px; }
.table { border-collapse: collapse; table-layout: fixed; width: 575px; height: 50px; margin: 15px 0 0 14px; background: #eee; }
.table tr { border: 1px solid #666; }
.table tr:first-child { border-bottom: 0; }
.table th { background: #ccc; height: 18px; line-height: 13px; font-weight: 400; text-align: left; width: 100px; }
.table td { height: 31px; }
.table th, .table td { padding: 0 0 3px 5px; border: solid #666; border-width: 0 1px; white-space: nowrap; }
.table td { padding-bottom: 5px; }
.table th { vertical-align: top; }
.table th:nth-child(2) { width: 58px; }
.table th:nth-child(3) { width: 61px; }
.table th:nth-child(4) { width: 120px; }
.table th:nth-child(5) { width: 64px; }
.table th:nth-child(6) { width: 99px; }
.table th:nth-child(7) { width: 73px; }

/* lecture lists */
.lectures li { height: 65.500px; padding: 3px 13px 0 9px; margin-right: 1px; }
.lectures li:nth-child(odd) { background: #eee; }
.lectures .s { font-size: 12px; line-height: 20px; display: flex; justify-content: space-between; }
.lectures .t { font-size: 14px; line-height: 23px; white-space: nowrap; }
.slots li { height: 50px; border-bottom: 1px solid #888; padding-top: 4px; }
.slots li:first-child { height: 47px; padding-top: 1px; }
.slots li:nth-child(4) { height: 54px; padding-top: 8px; }
.slots div { height: 42px; line-height: 21px; display: flex; padding-left: 12px; margin-right: 1px; }
.slots li:nth-child(even) div { background: #eee; }
.slots time { width: 58px; font-size: 13.500px; }
.slots p { flex: 1; white-space: nowrap; }
.slots span { float: right; }

/* day cards */
.days { display: flex; flex-direction: column; }
.mixed, .people { padding-top: 13px; gap: 10px; }
.day { display: grid; grid-template-columns: 66px 278px; }
.date { text-align: center; font-size: 13px; line-height: 22px; padding-top: 2px; }
.date b { display: block; font-size: 23px; font-weight: 400; line-height: 25px; }
.ev { height: 45px; border-radius: 5px; background: #2b78e4; color: #fff; font-size: 14px; line-height: 17px; padding: 2px 8px 1px 6px; display: flex; flex-direction: column; justify-content: space-between; }
.ev p { font-size: 12px; line-height: 17px; display: flex; justify-content: space-between; padding-left: 2px; }
.ev span { font-size: 13px; }
.ev.pale { background: #9fc5f8; }
.ev.steel { background: #597eaa; }
.ev.navy { background: #0b5394; }
.ev.sky { background: #6fa8dc; }
.mixed .ev + .ev { margin-top: 7px; }
.mixed .tall { height: 60px; padding-right: 40px; }
.mixed .tall p { margin-right: -32px; }
.mixed .short { height: 39px; }
.mixed .first .date { padding-top: 8px; }
.mixed .first .ev.short { margin-top: 10px; }
.mixed .day:nth-child(2) { margin-top: 1px; }
.mixed .day:nth-child(3) { margin-top: 3px; }
.mixed .day:nth-child(4) { margin-top: 4px; }
.people .ev { height: 57px; flex-direction: row; align-items: center; padding: 8px 15px 8px 6px; }
.people .ev > div { width: 205px; display: flex; flex-direction: column; justify-content: space-between; height: 41px; }
.people .tall { height: 68px; }
.people .ev.tall > div { height: 52px; }
.people .ev p { color: #eee; }
.people .ev svg { width: 35px; height: 35px; }
.people .ev + .ev { margin-top: 9px; }
.people .ev + .apart { margin-top: 14px; }
.plain { padding-top: 12px; gap: 15px; }
.plain .day { grid-template-columns: 65px 280px; }
.plain .day:nth-child(3) { margin-top: 1px; }
.plain .date { padding: 8px 14px 0 0; }
.plain .ev { height: 42px; padding: 3px 17px 2px 7px; }
.plain .ev.tall { height: 62px; padding-right: 40px; }
.plain .tall p { margin-right: -23px; }
.plain .ev + .ev { margin-top: 8px; }
.plain .tall + .ev { margin-top: 7px; }

/* agenda */
.heading { margin: 0 15px; height: 39px; border-bottom: 1px solid #ccc; font-size: 20px; font-weight: 400; line-height: 38px; padding-left: 2px; }
.agenda { display: grid; grid-template-columns: 78px 1fr; height: 530px; color: #000; }
.agenda ul { padding-top: 11px; }
.agenda.tight ul { padding-top: 6px; }
.agenda li { display: flex; justify-content: space-between; padding-right: 19px; height: 58px; }
.agenda li > div { width: 227px; }
.agenda h4 { color: #2b78e4; font-size: 14px; line-height: 17px; font-weight: 700; letter-spacing: .15px; }
.agenda p { display: flex; align-items: center; height: 17px; margin-top: 5px; }
.agenda p svg { width: 16px; height: 16px; margin: 0 6px 0 15px; }
.agenda em { color: #999; font-size: 13.500px; }
.agenda time { line-height: 21.500px; margin-top: -2px; font-size: 13px; }
.agenda .two p { margin-top: 3px; }
.agenda .two svg { margin-left: 19px; }
.agenda .two { height: 73px; }
.tight li:nth-child(1) { height: 51px; }
.tight li:nth-child(3) { height: 52px; }
.agenda.tight li:nth-child(4) { height: 68.500px; }
.tight li:nth-child(5) { height: 49px; }
.tight li:nth-child(6), .tight li:nth-child(7) { height: 47.300px; }
.rail { display: flex; flex-direction: column; align-items: flex-start; }
.numbers { padding: 5px 0 0 19px; }
.numbers b { font-size: 16px; line-height: 20px; font-weight: 400; }
.numbers i { width: 1px; background: #444; margin-left: 8px; height: 173px; }
.numbers i:nth-of-type(2) { height: 165px; margin-top: 3px; }
.numbers i:nth-of-type(3) { height: 110px; margin-top: 4px; }
.badges, .dots { background: linear-gradient(#2b78e4, #2b78e4) 27px 0 / 1.500px 100% no-repeat; padding: 4px 0 0 15px; }
.rail.badges b { background: #2b78e4; color: #fff; width: 26px; height: 24px; font-size: 16px; line-height: 23px; font-weight: 400; text-align: center; margin-bottom: 157px; }
.rail.badges b:nth-child(2) { margin-bottom: 137px; }
.dots { padding-top: 9px; background-size: 1px 100%; }
.dots b { background: #2b78e4; color: #fff; width: 26px; height: 40px; font-size: 15px; text-align: center; line-height: 17px; padding-top: 2px; }
.dots small { display: block; font-size: 13px; font-weight: 400; }
.dots i { width: 11px; height: 11px; border: 1px solid #2b78e4; border-radius: 50%; background: #fff; margin: 13px 0 0 7px; }
.dots i:nth-child(3) { margin: 62px 0 40px 7px; }
.dots i:nth-child(5) { margin-top: 29px; }
.dots i:nth-child(6) { margin: 39px 0 31px 7px; }
.dots i:nth-child(8) { margin-top: 10px; }
.dots i:nth-child(9) { margin-top: 49px; }

/* coloured blocks */
.blocks { padding: 13px 11px; }
.blk { height: 54px; background: #2b78e4; color: #fff; display: flex; justify-content: space-between; padding: 5px 19px 0 18px; line-height: 21px; font-size: 13px; white-space: nowrap; }
.blk:first-child { height: 53px; }
.blk.cut { padding-top: 3px; }
.deep { background: #0b5394; }
.sep { height: 34px; display: flex; position: relative; color: #597eaa; }
.sep i { width: 1px; background: #fff; margin: 0 24px 0 11px; position: relative; }
.sep i::before, .sep i::after { content: ""; position: absolute; left: -5px; top: -5px; width: 11px; height: 11px; border-radius: 50%; background: #fff; }
.sep i::after { top: auto; bottom: -5px; z-index: 1; }
.sep p { font-size: 10px; font-weight: 700; line-height: 12px; padding-top: 5px; }
.sep b { display: block; font-size: 13px; line-height: 13px; color: #2b78e4; }

/* notices */
.notice { padding-top: 106px; display: flex; flex-direction: column; align-items: center; color: #666; }
.notice svg { width: 46px; height: 46px; }
.notice p { margin-top: 17px; }
.notice .offline { margin: 20px 0 36px; }
.notice .btn { width: 74px; }

/* week list */
.week h3 { height: 32px; background: #2b78e4; color: #fff; padding-left: 143px; font-size: 14.500px; line-height: 31px; }
.week h3:first-child { height: 31px; }
.wk { height: 47px; border-bottom: 1px solid #ddd; padding: 6px 14px 0 8px; display: flex; justify-content: space-between; line-height: 16px; }
.wk.end { border: 0; }
.wk a { color: #2b78e4; display: block; margin-bottom: 4px; letter-spacing: .1px; }
.wk.w45 { height: 45px; }
.wk.w46 { height: 46px; }
.wk.w49 { height: 49px; }
.wk.up { padding-top: 2px; }
.wk.none { padding-top: 11px; }
.wk.low { padding-top: 13px; }

/* plan */
.plan { padding: 12px 0 0 11px; color: #000; line-height: 20px; }
.plan h3 { color: #2b78e4; font-size: 14px; margin-top: 21px; }
.plan h3:first-child { margin-top: 0; }
.plan h3 + p { margin-top: 1.500px; }
.plan p { margin-top: 18.500px; }
.plan .gap { margin-top: 24.500px; }
.plan .far { margin-top: 26px; }
.plan .far + h3 { margin-top: 7px; }
.plan small { display: block; font-size: 10px; line-height: 18px; color: #777; }
.plan .after { margin-top: 22px; }

/* lecture objects */
.objs { padding: 7px 0 6px 18px; display: grid; gap: 5.500px; }
.objs.spaced { padding-top: 9px; }
.objs.single { padding-bottom: 8px; }
.obj { display: grid; grid-template-columns: 96px 237px; align-items: center; }
.obj p { height: 50px; background: #2b78e4; border-radius: 5px; color: #fff; padding: 9px 0 0 9px; }
.obj span { color: #eee; }
.orange { height: 33px; background: #f6b26b; color: #fff; font-size: 16px; line-height: 31px; padding-left: 138px; }

/* news */
.news li { height: 47px; border-bottom: 1px solid #ccc; display: flex; padding: 6px 5px 0 10px; }
.news li:first-child { height: 51px; padding-top: 10px; }
.news a, .cards a, .letters a { color: #2b78e4; }
.news a { width: 260px; white-space: nowrap; }
.news .long { letter-spacing: -.15px; }
.news time { width: 70px; text-align: center; }
.news time b { display: block; color: #c00; }
.news i { width: 10px; height: 37px; background: #2b78e4; margin: -2px 0 0 5px; }
.drawer { position: absolute; left: 0; top: 48px; width: 252px; height: 568px; background: #6fa8dc; color: #fff; padding-top: 8px; }
.drawer h6 { font-size: 11px; line-height: 15px; font-weight: 500; padding-left: 10px; border-bottom: 1px solid #fff; margin-bottom: 2px; }
.drawer p { font-size: 14px; line-height: 20px; padding-left: 10px; margin-bottom: 2px; }
.drawer p + h6 { margin: 28px 0 6px; }
.drawer p:nth-of-type(4) { margin-top: 5px; }
.drawer p + h6:last-of-type { margin-top: 32px; }
.cards { padding: 8px 0 0 15px; display: grid; gap: 8px; }
.cards li { width: 332px; height: 47px; background: #fff; border: 1px solid #eee; border-radius: 5px; display: flex; padding: 7px 0 0 8px; }
.cards li:nth-child(4) { margin-top: -1px; }
.cards a { width: 242px; }
.letters { padding-top: 14px; }
.letters li { display: flex; padding-left: 17px; height: 42px; color: #000; }
.letters b { width: 30px; height: 31px; border-radius: 50%; background: #f90; color: #fff; font-size: 18px; line-height: 31px; text-align: center; }
.letters li + li { height: 47px; }
.letters a { width: 248px; margin: 0 2px 0 14px; padding-top: 1px; white-space: normal; }
.letters li:nth-child(2) a { letter-spacing: -.1px; }
.letters time { padding-top: 1px; }
.letters li:first-child a, .letters li:first-child time { padding-top: 2px; }

/* sticky notes and the flow arrow */
.note { position: absolute; width: 106px; height: 120px; color: #000; }
.note svg { position: absolute; width: 100%; height: 100%; }
.note p { position: relative; padding: 10px 0 0 11px; font-size: 13px; }
.note-search { left: 803px; top: 428px; }
.note-search p { width: 90px; }
.note-news { left: 1486px; top: 298px; width: 113px; height: 124px; }
.note-old { left: 1058px; top: 2901px; }
.note-old p { width: 80px; }
.flow { position: absolute; left: 1448px; top: 1770px; width: 190px; height: 40px; }
```
